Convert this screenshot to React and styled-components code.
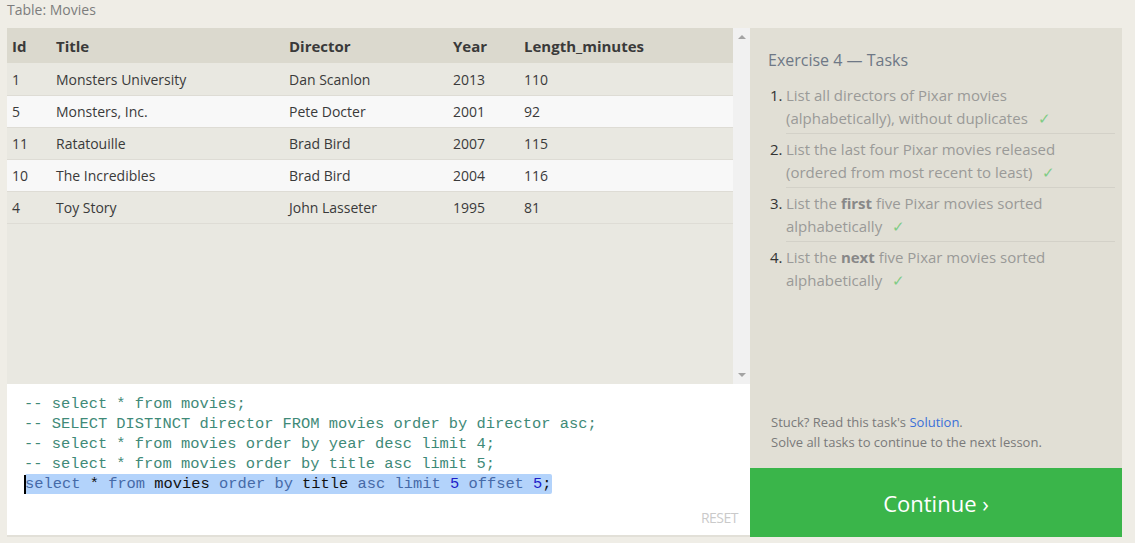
import React from 'react';
import styled, { createGlobalStyle } from 'styled-components';

const GlobalStyle = createGlobalStyle`
    html, body {
        margin: 0;
        padding: 0;
        background: #efede6;
    }
    body {
        font-family: 'Open Sans', 'Noto Sans', sans-serif;
        color: #333;
    }
`;

const movies = [
    { id: 1, title: 'Monsters University', director: 'Dan Scanlon', year: 2013, length: 110 },
    { id: 5, title: 'Monsters, Inc.', director: 'Pete Docter', year: 2001, length: 92 },
    { id: 11, title: 'Ratatouille', director: 'Brad Bird', year: 2007, length: 115 },
    { id: 10, title: 'The Incredibles', director: 'Brad Bird', year: 2004, length: 116 },
    { id: 4, title: 'Toy Story', director: 'John Lasseter', year: 1995, length: 81 },
];

const comments = [
    '-- select * from movies;',
    '-- SELECT DISTINCT director FROM movies order by director asc;',
    '-- select * from movies order by year desc limit 4;',
    '-- select * from movies order by title asc limit 5;',
];

const lastLine = [
    ['kw', 'select'], ['', ' * '], ['kw', 'from'], ['', ' movies '], ['kw', 'order by'],
    ['', ' title '], ['kw', 'asc'], ['', ' '], ['kw', 'limit'], ['', ' '], ['num', '5'],
    ['', ' '], ['kw', 'offset'], ['', ' '], ['num', '5'], ['', ';'],
];

const tasks = [
    <>List all directors of Pixar movies (alphabetically), without duplicates</>,
    <>List the last four Pixar movies released (ordered from most recent to least)</>,
    <>List the <b>first</b> five Pixar movies sorted alphabetically</>,
    <>List the <b>next</b> five Pixar movies sorted alphabetically</>,
];

const App = () => {
    return (
        <Page>
            <GlobalStyle />
            <Caption>Table: Movies</Caption>
            <Main>
                <LeftColumn>
                    <TableArea>
                        <TableScroll>
                            <Table>
                                <colgroup>
                                    <col style={{ width: 44 }} />
                                    <col style={{ width: 233 }} />
                                    <col style={{ width: 164 }} />
                                    <col style={{ width: 71 }} />
                                    <col />
                                </colgroup>
                                <thead>
                                    <tr>
                                        <th>Id</th>
                                        <th>Title</th>
                                        <th>Director</th>
                                        <th>Year</th>
                                        <th>Length_minutes</th>
                                    </tr>
                                </thead>
                                <tbody>
                                    {movies.map((m) => (
                                        <tr key={m.id}>
                                            <td>{m.id}</td>
                                            <td>{m.title}</td>
                                            <td>{m.director}</td>
                                            <td>{m.year}</td>
                                            <td>{m.length}</td>
                                        </tr>
                                    ))}
                                </tbody>
                            </Table>
                        </TableScroll>
                        <ScrollBar>
                            <Arrow $dir='up' />
                            <Arrow $dir='down' />
                        </ScrollBar>
                    </TableArea>
                    <Editor>
                        {comments.map((c) => (
                            <CodeLine key={c}>
                                <Comment>{c}</Comment>
                            </CodeLine>
                        ))}
                        <CodeLine>
                            <Cursor />
                            <Selected>
                                {lastLine.map(([kind, text], i) => (
                                    <Token key={i} $kind={kind}>{text}</Token>
                                ))}
                            </Selected>
                        </CodeLine>
                        <Reset>RESET</Reset>
                    </Editor>
                </LeftColumn>
                <RightColumn>
                    <TaskPanel>
                        <TaskTitle>Exercise 4 — Tasks</TaskTitle>
                        <TaskList>
                            {tasks.map((t, i) => (
                                <TaskItem key={i}>
                                    <TaskNumber>{i + 1}.</TaskNumber>
                                    <TaskText $last={i === tasks.length - 1}>
                                        {t}
                                        <Check>✓</Check>
                                    </TaskText>
                                </TaskItem>
                            ))}
                        </TaskList>
                        <Hint>
                            <div>
                                Stuck? Read this task's <a>Solution</a>.
                            </div>
                            <div>Solve all tasks to continue to the next lesson.</div>
                        </Hint>
                    </TaskPanel>
                    <ContinueButton>Continue ›</ContinueButton>
                </RightColumn>
            </Main>
        </Page>
    );
};

const Page = styled.div`
    width: 1135px;
    height: 543px;
    padding: 0 13px 0 7px;
    box-sizing: border-box;
    overflow: hidden;
`;

const Caption = styled.div`
    height: 28px;
    line-height: 20px;
    font-size: 14px;
    color: #7d7d7d;
`;

const Main = styled.div`
    display: grid;
    grid-template-columns: 743px 372px;
    height: 509px;
`;

const LeftColumn = styled.div`
    display: flex;
    flex-direction: column;
    min-height: 0;
`;

const TableArea = styled.div`
    display: flex;
    height: 356px;
    background: #e9e8e1;
`;

const TableScroll = styled.div`
    flex: 1;
`;

const Table = styled.table`
    width: 100%;
    border-collapse: collapse;
    table-layout: fixed;
    font-size: 14px;
    th {
        height: 35px;
        padding: 0 5px;
        text-align: left;
        font-weight: 700;
        font-size: 15px;
        color: #3a3a3a;
        background: #dbd9ce;
    }
    td {
        height: 32px;
        padding: 1px 5px 0;
        box-sizing: border-box;
        color: #3a3a3a;
        border-bottom: 1px solid #dedcd5;
    }
    tbody tr:nth-child(even) td {
        background: #f8f8f8;
    }
`;

const ScrollBar = styled.div`
    width: 17px;
    background: #f1f1f1;
    display: flex;
    flex-direction: column;
    justify-content: space-between;
    align-items: center;
    padding: 7px 0;
`;

const Arrow = styled.div`
    width: 0;
    height: 0;
    border-left: 4px solid transparent;
    border-right: 4px solid transparent;
    ${(p) => (p.$dir === 'up' ? 'border-bottom: 4px solid #a3a3a3;' : 'border-top: 4px solid #a3a3a3;')}
`;

const Editor = styled.div`
    position: relative;
    flex: 1;
    background: #fff;
    border-bottom: 2px solid #e2e0d8;
    padding: 10px 0 0 17px;
    font-family: 'Liberation Mono', 'DejaVu Sans Mono', monospace;
    font-size: 15.4px;
`;

const CodeLine = styled.div`
    height: 20px;
    line-height: 20px;
    white-space: pre;
    display: flex;
    align-items: center;
`;

const Comment = styled.span`
    color: #3f8a78;
`;

const Cursor = styled.span`
    width: 2px;
    height: 19px;
    margin-right: -1px;
    background: #000;
    position: relative;
    z-index: 1;
`;

const Selected = styled.span`
    background: #b3d3fb;
    border-radius: 2px;
`;

const Token = styled.span`
    color: ${(p) => (p.$kind === 'kw' ? '#466aa8' : p.$kind === 'num' ? '#1c1cc8' : '#111')};
`;

const Reset = styled.div`
    position: absolute;
    right: 12px;
    bottom: 8px;
    font-family: 'Open Sans', sans-serif;
    font-size: 14px;
    color: #cacaca;
    letter-spacing: -0.5px;
`;

const RightColumn = styled.div`
    display: flex;
    flex-direction: column;
`;

const TaskPanel = styled.div`
    flex: 1;
    display: flex;
    flex-direction: column;
    background: #e1dfd5;
    padding: 20px 7px 16px 18px;
    box-sizing: border-box;
`;

const TaskTitle = styled.div`
    font-size: 16px;
    color: #6e7886;
    line-height: 24px;
`;

const TaskList = styled.div`
    margin-top: 8px;
    display: flex;
    flex-direction: column;
`;

const TaskItem = styled.div`
    display: flex;
`;

const TaskNumber = styled.div`
    width: 18px;
    flex: none;
    box-sizing: border-box;
    font-size: 15px;
    line-height: 23px;
    color: #333;
    padding: 4px 0 0 2px;
`;

const TaskText = styled.div`
    flex: 1;
    font-size: 15px;
    line-height: 23px;
    color: #9a9a98;
    padding: 4px 0 3px 0;
    border-bottom: ${(p) => (p.$last ? 'none' : '1px solid #d3d1c8')};
    b {
        color: #888;
    }
`;

const Check = styled.span`
    color: #7fcc85;
    margin-left: 10px;
`;

const Hint = styled.div`
    margin-top: auto;
    padding-left: 3px;
    font-size: 13px;
    line-height: 20px;
    color: #7a7a7a;
    a {
        color: #3a6fd8;
    }
`;

const ContinueButton = styled.div`
    height: 69px;
    background: #3ab54a;
    color: #fff;
    font-size: 22px;
    display: flex;
    align-items: center;
    justify-content: center;
`;

export default App;
